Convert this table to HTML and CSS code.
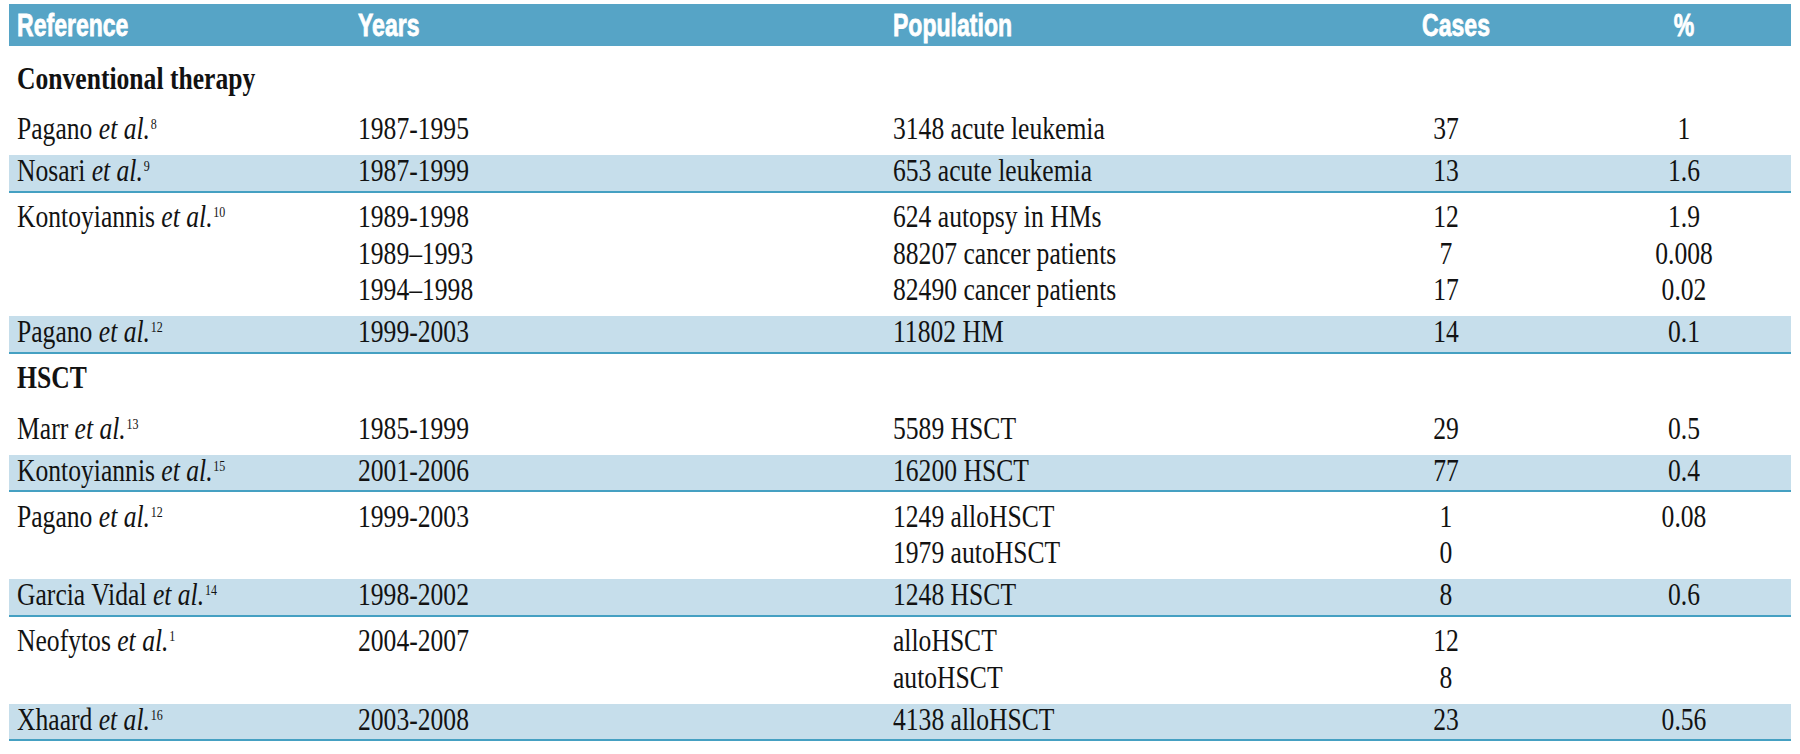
FILE: index.html
```html
<!DOCTYPE html>
<html>
<head>
<meta charset="utf-8">
<link rel="stylesheet" href="styles.css">
</head>
<body>
<div class="table">
  <div class="row head">
    <div class="cell"><div class="l">Reference</div></div>
    <div class="cell"><div class="l">Years</div></div>
    <div class="cell"><div class="l">Population</div></div>
    <div class="cell c n"><div class="l">Cases</div></div>
    <div class="cell c"><div class="l">%</div></div>
  </div>

  <div class="row sec first">
    <div class="cell"><div class="l">Conventional therapy</div></div>
    <div class="cell"></div><div class="cell"></div><div class="cell c n"></div><div class="cell c"></div>
  </div>

  <div class="row">
    <div class="cell"><div class="l">Pagano <i>et al.</i><sup>8</sup></div></div>
    <div class="cell"><div class="l">1987-1995</div></div>
    <div class="cell"><div class="l">3148 acute leukemia</div></div>
    <div class="cell c n"><div class="l">37</div></div>
    <div class="cell c"><div class="l">1</div></div>
  </div>

  <div class="row band">
    <div class="cell"><div class="l">Nosari <i>et al.</i><sup>9</sup></div></div>
    <div class="cell"><div class="l">1987-1999</div></div>
    <div class="cell"><div class="l">653 acute leukemia</div></div>
    <div class="cell c n"><div class="l">13</div></div>
    <div class="cell c"><div class="l">1.6</div></div>
  </div>

  <div class="row">
    <div class="cell"><div class="l">Kontoyiannis <i>et al.</i><sup>10</sup></div></div>
    <div class="cell"><div class="l">1989-1998</div><div class="l">1989–1993</div><div class="l">1994–1998</div></div>
    <div class="cell"><div class="l">624 autopsy in HMs</div><div class="l">88207 cancer patients</div><div class="l">82490 cancer patients</div></div>
    <div class="cell c n"><div class="l">12</div><div class="l">7</div><div class="l">17</div></div>
    <div class="cell c"><div class="l">1.9</div><div class="l">0.008</div><div class="l">0.02</div></div>
  </div>

  <div class="row band">
    <div class="cell"><div class="l">Pagano <i>et al.</i><sup>12</sup></div></div>
    <div class="cell"><div class="l">1999-2003</div></div>
    <div class="cell"><div class="l">11802 HM</div></div>
    <div class="cell c n"><div class="l">14</div></div>
    <div class="cell c"><div class="l">0.1</div></div>
  </div>

  <div class="row sec">
    <div class="cell"><div class="l">HSCT</div></div>
    <div class="cell"></div><div class="cell"></div><div class="cell c n"></div><div class="cell c"></div>
  </div>

  <div class="row">
    <div class="cell"><div class="l">Marr <i>et al.</i><sup>13</sup></div></div>
    <div class="cell"><div class="l">1985-1999</div></div>
    <div class="cell"><div class="l">5589 HSCT</div></div>
    <div class="cell c n"><div class="l">29</div></div>
    <div class="cell c"><div class="l">0.5</div></div>
  </div>

  <div class="row band">
    <div class="cell"><div class="l">Kontoyiannis <i>et al.</i><sup>15</sup></div></div>
    <div class="cell"><div class="l">2001-2006</div></div>
    <div class="cell"><div class="l">16200 HSCT</div></div>
    <div class="cell c n"><div class="l">77</div></div>
    <div class="cell c"><div class="l">0.4</div></div>
  </div>

  <div class="row">
    <div class="cell"><div class="l">Pagano <i>et al.</i><sup>12</sup></div></div>
    <div class="cell"><div class="l">1999-2003</div></div>
    <div class="cell"><div class="l">1249 alloHSCT</div><div class="l">1979 autoHSCT</div></div>
    <div class="cell c n"><div class="l">1</div><div class="l">0</div></div>
    <div class="cell c"><div class="l">0.08</div></div>
  </div>

  <div class="row band">
    <div class="cell"><div class="l">Garcia Vidal <i>et al.</i><sup>14</sup></div></div>
    <div class="cell"><div class="l">1998-2002</div></div>
    <div class="cell"><div class="l">1248 HSCT</div></div>
    <div class="cell c n"><div class="l">8</div></div>
    <div class="cell c"><div class="l">0.6</div></div>
  </div>

  <div class="row">
    <div class="cell"><div class="l">Neofytos <i>et al.</i><sup>1</sup></div></div>
    <div class="cell"><div class="l">2004-2007</div></div>
    <div class="cell"><div class="l">alloHSCT</div><div class="l">autoHSCT</div></div>
    <div class="cell c n"><div class="l">12</div><div class="l">8</div></div>
    <div class="cell c"></div>
  </div>

  <div class="row band">
    <div class="cell"><div class="l">Xhaard <i>et al.</i><sup>16</sup></div></div>
    <div class="cell"><div class="l">2003-2008</div></div>
    <div class="cell"><div class="l">4138 alloHSCT</div></div>
    <div class="cell c n"><div class="l">23</div></div>
    <div class="cell c"><div class="l">0.56</div></div>
  </div>
</div>
</body>
</html>
```

FILE: styles.css
```css
html, body {
  margin: 0;
  background: #ffffff;
}
body {
  padding: 4px 9px 0 9px;
  font-family: "Liberation Serif", "Times New Roman", serif;
  color: #121212;
}
.table {
  width: 1782px;
}
.row {
  display: grid;
  grid-template-columns: 341px 535px 445px 247px 214px;
  padding: 5.5px 0 8.5px 0;
  font-size: 32px;
  line-height: 36.5px;
}
.cell {
  padding-left: 8px;
  white-space: nowrap;
}
.cell.c {
  padding-left: 0;
  text-align: center;
}
.cell.n {
  padding-right: 15px;
}
.l {
  transform: scaleX(0.8);
  transform-origin: left center;
}
.c .l {
  transform-origin: center center;
}
.l i {
  font-style: italic;
}
sup {
  font-size: 15px;
  line-height: 0;
  vertical-align: 0;
  position: relative;
  top: -10px;
  margin-left: 1px;
}
.head {
  background: #56a4c6;
  color: #ffffff;
  padding: 0;
  height: 42px;
  font-family: "Liberation Sans", Arial, sans-serif;
  font-weight: 700;
  font-size: 32px;
  line-height: 42px;
  -webkit-text-stroke: 0.8px #ffffff;
}
.head .l {
  transform: scaleX(0.72);
}
.head .cell.n {
  padding-right: 0;
  padding-left: 5px;
}
.sec {
  font-weight: 700;
}
.sec.first {
  padding-top: 13.5px;
}
.band {
  background: #c6deeb;
  border-bottom: 2.5px solid #45a0c2;
  padding: 0 0 5.5px 0;
  line-height: 30px;
}
```
